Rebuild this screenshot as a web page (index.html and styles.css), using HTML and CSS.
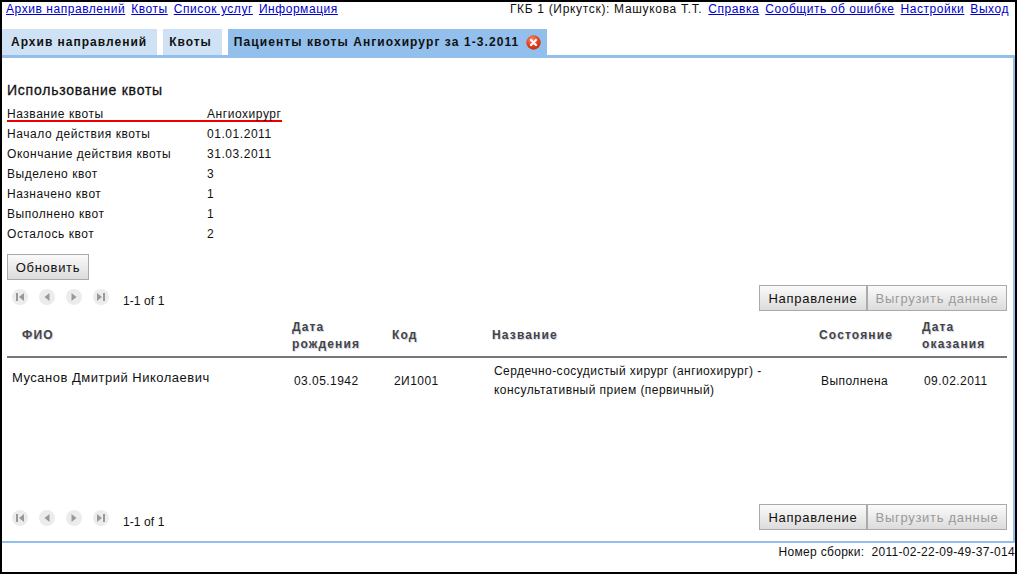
FILE: index.html
```html
<!DOCTYPE html>
<html lang="ru">
<head>
    <meta charset="UTF-8">
    <title>Пациенты квоты</title>
    <link rel="stylesheet" href="styles.css">
</head>
<body>
    <div class="frame">
        <div class="topbar">
            <div class="links">
                <a href="#">Архив направлений</a>
                <a href="#">Квоты</a>
                <a href="#">Список услуг</a>
                <a href="#">Информация</a>
            </div>
            <div class="links">
                <span class="user">ГКБ 1 (Иркутск): Машукова Т.Т.</span>
                <a href="#">Справка</a>
                <a href="#">Сообщить об ошибке</a>
                <a href="#">Настройки</a>
                <a href="#">Выход</a>
            </div>
        </div>

        <div class="tabs">
            <div class="tab tab-first">Архив направлений</div>
            <div class="tab">Квоты</div>
            <div class="tab tab-active">
                Пациенты квоты Ангиохирург за 1-3.2011
                <svg class="close-icon" width="15" height="15" viewBox="0 0 15 15">
                    <defs>
                        <radialGradient id="closeFill" cx="40%" cy="30%" r="75%">
                            <stop offset="0" stop-color="#f98a6c"/>
                            <stop offset="0.6" stop-color="#e2401c"/>
                            <stop offset="1" stop-color="#c02c10"/>
                        </radialGradient>
                    </defs>
                    <circle cx="7.5" cy="7.5" r="7.2" fill="url(#closeFill)"/>
                    <path d="M5 5l5 5M10 5l-5 5" stroke="#fff" stroke-width="2.2" stroke-linecap="round"/>
                </svg>
            </div>
        </div>

        <div class="panel">
            <h1>Использование квоты</h1>
            <div class="quota">
                <div class="quota-row quota-row-main"><span>Название квоты</span><span>Ангиохирург</span></div>
                <div class="quota-row"><span>Начало действия квоты</span><span>01.01.2011</span></div>
                <div class="quota-row"><span>Окончание действия квоты</span><span>31.03.2011</span></div>
                <div class="quota-row"><span>Выделено квот</span><span>3</span></div>
                <div class="quota-row"><span>Назначено квот</span><span>1</span></div>
                <div class="quota-row"><span>Выполнено квот</span><span>1</span></div>
                <div class="quota-row"><span>Осталось квот</span><span>2</span></div>
            </div>
            <button class="btn btn-refresh">Обновить</button>

            <div class="toolbar">
                <div class="pager">
                    <span class="page-btn"><svg width="10" height="10" viewBox="0 0 10 10"><path d="M1 1h2v8H1zM9 1v8L4 5z"/></svg></span>
                    <span class="page-btn"><svg width="10" height="10" viewBox="0 0 10 10"><path d="M7.5 1v8L2.5 5z"/></svg></span>
                    <span class="page-btn"><svg width="10" height="10" viewBox="0 0 10 10"><path d="M2.5 1v8l5-4z"/></svg></span>
                    <span class="page-btn"><svg width="10" height="10" viewBox="0 0 10 10"><path d="M7 1h2v8H7zM1 1v8l5-4z"/></svg></span>
                    <span class="page-info">1-1 of 1</span>
                </div>
                <div class="actions">
                    <button class="btn btn-route">Направление</button>
                    <button class="btn btn-export" disabled>Выгрузить данные</button>
                </div>
            </div>

            <div class="table-wrap">
                <table>
                    <thead>
                        <tr>
                            <th class="col-name">ФИО</th>
                            <th class="col-birth">Дата<br>рождения</th>
                            <th class="col-code">Код</th>
                            <th class="col-title">Название</th>
                            <th class="col-state">Состояние</th>
                            <th class="col-date">Дата<br>оказания</th>
                        </tr>
                    </thead>
                    <tbody>
                        <tr>
                            <td class="patient">Мусанов Дмитрий Николаевич</td>
                            <td>03.05.1942</td>
                            <td>2И1001</td>
                            <td>Сердечно-сосудистый хирург (ангиохирург) -<br>консультативный прием (первичный)</td>
                            <td>Выполнена</td>
                            <td>09.02.2011</td>
                        </tr>
                    </tbody>
                </table>
            </div>

            <div class="toolbar toolbar-bottom">
                <div class="pager">
                    <span class="page-btn"><svg width="10" height="10" viewBox="0 0 10 10"><path d="M1 1h2v8H1zM9 1v8L4 5z"/></svg></span>
                    <span class="page-btn"><svg width="10" height="10" viewBox="0 0 10 10"><path d="M7.5 1v8L2.5 5z"/></svg></span>
                    <span class="page-btn"><svg width="10" height="10" viewBox="0 0 10 10"><path d="M2.5 1v8l5-4z"/></svg></span>
                    <span class="page-btn"><svg width="10" height="10" viewBox="0 0 10 10"><path d="M7 1h2v8H7zM1 1v8l5-4z"/></svg></span>
                    <span class="page-info">1-1 of 1</span>
                </div>
                <div class="actions">
                    <button class="btn btn-route">Направление</button>
                    <button class="btn btn-export" disabled>Выгрузить данные</button>
                </div>
            </div>
        </div>

        <div class="footer">Номер сборки: &nbsp;2011-02-22-09-49-37-014</div>
    </div>
</body>
</html>
```

FILE: styles.css
```css
body {
    margin: 0;
    background: white;
    font-family: "Liberation Sans", Arial, sans-serif;
    font-size: 12px;
    color: #111;
}
.frame {
    box-sizing: border-box;
    display: flex;
    flex-direction: column;
    width: 1017px;
    height: 574px;
    border: 2px solid #000;
}
.topbar {
    display: flex;
    justify-content: space-between;
    height: 27px;
    padding: 0 6px 0 4px;
    line-height: 14px;
    letter-spacing: 0.55px;
}
.links {
    display: flex;
    gap: 6px;
}
.links a {
    color: #00c;
}
.user {
    letter-spacing: 0.68px;
}
.tabs {
    display: flex;
    gap: 6px;
    height: 26px;
}
.tab {
    display: flex;
    align-items: center;
    padding: 0 10px 0 6px;
    background: #cfe2f5;
    font-weight: bold;
    letter-spacing: 1px;
}
.tab-first {
    padding-left: 9px;
}
.tab-active {
    background: #93bfec;
    padding-right: 6px;
    letter-spacing: 1.08px;
}
.close-icon {
    margin-left: 7px;
}
.panel {
    flex: 1;
    display: flex;
    flex-direction: column;
    border-top: 3px solid #93bfec;
    border-right: 2px solid #93bfec;
    border-bottom: 2px solid #93bfec;
    padding: 24px 6px 12px 5px;
}
h1 {
    margin: 0;
    font-size: 14px;
    font-weight: normal;
    line-height: 16px;
    -webkit-text-stroke: 0.3px #111;
    letter-spacing: 0.77px;
}
.quota {
    margin-top: 6px;
    letter-spacing: 0.55px;
}
.quota-row {
    display: grid;
    grid-template-columns: 200px 1fr;
    width: 275px;
    height: 20px;
    line-height: 20px;
}
.quota-row-main {
    box-sizing: border-box;
    height: 18px;
    margin-bottom: 2px;
    border-bottom: 2px solid #e00;
}
.btn {
    box-sizing: border-box;
    height: 26px;
    border: 1px solid #aaa;
    border-radius: 0;
    background: linear-gradient(#fafafa, #dcdcdc);
    font-family: inherit;
    font-size: 13px;
    color: #111;
    letter-spacing: 0.7px;
    padding: 0;
}
.btn-refresh {
    width: 82px;
    margin-top: 10px;
}
.toolbar {
    display: flex;
    justify-content: space-between;
    align-items: flex-start;
    margin-top: 5px;
    height: 25px;
}
.toolbar-bottom {
    margin-top: 0;
}
.toolbar-bottom .pager {
    margin-top: 2px;
}
.pager {
    display: flex;
    align-items: center;
    gap: 11px;
    padding-left: 5px;
    height: 24px;
}
.page-btn {
    display: flex;
    align-items: center;
    justify-content: center;
    width: 16px;
    height: 16px;
    border-radius: 50%;
    background: #ececec;
}
.page-btn svg {
    fill: #999;
}
.page-info {
    margin: 7px 0 0 3px;
    letter-spacing: 0.1px;
}
.actions {
    display: flex;
}
.btn-route {
    width: 108px;
}
.btn-export {
    width: 140px;
    color: #999;
}
.table-wrap {
    flex: 1;
    margin-top: 4px;
}
table {
    width: 1000px;
    table-layout: fixed;
    border-collapse: collapse;
}
th {
    height: 41px;
    padding: 1px 0 0 7px;
    border-bottom: 2px solid #777;
    font-size: 12px;
    line-height: 17px;
    text-align: left;
    color: #444;
    letter-spacing: 1.15px;
    text-shadow: 1px 1px 1px #cdd3ea;
}
.col-name {
    width: 263px;
    padding-left: 15px;
}
.col-birth,
.col-code {
    width: 93px;
}
.col-title {
    width: 320px;
}
.col-state {
    width: 96px;
}
td {
    height: 38px;
    padding: 0 0 0 9px;
    line-height: 19px;
    letter-spacing: 0.45px;
}
td.patient {
    padding: 0 0 8px 5px;
    font-size: 13px;
    letter-spacing: 0.5px;
}
.footer {
    height: 29px;
    line-height: 18px;
    text-align: right;
    letter-spacing: 0.3px;
}
```
